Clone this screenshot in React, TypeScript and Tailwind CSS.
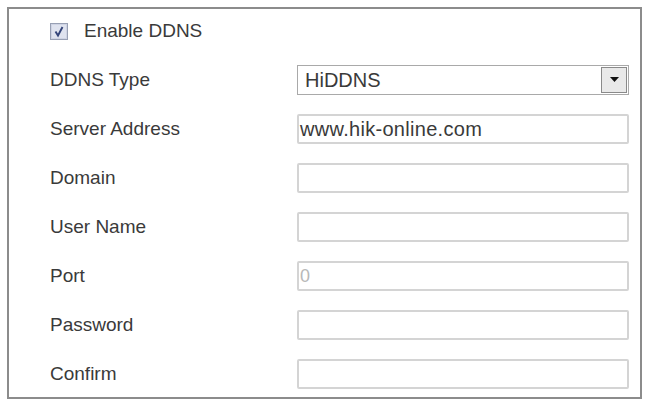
import React from 'react';

const fields = [
  { label: 'Server Address', value: 'www.hik-online.com' },
  { label: 'Domain', value: '' },
  { label: 'User Name', value: '' },
  { label: 'Port', value: '0', muted: true },
  { label: 'Password', value: '' },
  { label: 'Confirm', value: '' },
];

function CheckBox() {
  return (
    <svg width="18" height="17" viewBox="0 0 18 17">
      <rect x="0.5" y="0.5" width="17" height="16" fill="#cfd4e4" stroke="#98a0b4" />
      <rect x="2" y="2" width="14" height="13" fill="#dfe3ef" />
      <path d="M5.5 8.5 L8 12.5 L12.5 4" fill="none" stroke="#34457a" strokeWidth="1.9" />
    </svg>
  );
}

export default function App() {
  return (
    <div className="bg-white w-[653px] h-[401px] pt-[7px] pl-[7px] font-['Liberation_Sans',Arial,sans-serif] text-[19px] text-[#3a3a3a]">
      <div className="w-[635px] h-[392px] border-2 border-[#8c8c8c] pl-[41px] pt-[7px] flex flex-col gap-[19px]">
        <div className="h-[30px] flex items-center">
          <CheckBox />
          <span className="ml-[16px]">Enable DDNS</span>
        </div>

        <div className="h-[30px] flex items-center">
          <div className="w-[247px]">DDNS Type</div>
          <div className="w-[332px] h-[30px] border border-[#a9a9a9] flex items-center justify-between pl-[7px] pr-[1px]">
            <span className="text-[20px]">HiDDNS</span>
            <div className="w-[26px] h-[26px] border border-[#8a8a8a] bg-[#e9e9e9] flex items-center justify-center">
              <svg width="9" height="6" viewBox="0 0 9 6">
                <path d="M0 0 H9 L4.5 5 Z" fill="#111" />
              </svg>
            </div>
          </div>
        </div>

        {fields.map((f) => (
          <div key={f.label} className="h-[30px] flex items-center">
            <div className="w-[247px]">{f.label}</div>
            <div className="w-[332px] h-[30px] border-2 border-[#d4d4d4] rounded-[2px] flex items-center pl-[1px]">
              <span className={f.muted ? 'text-[18px] text-[#b8b8b8]' : 'text-[20px] tracking-[0.3px]'}>{f.value}</span>
            </div>
          </div>
        ))}
      </div>
    </div>
  );
}
